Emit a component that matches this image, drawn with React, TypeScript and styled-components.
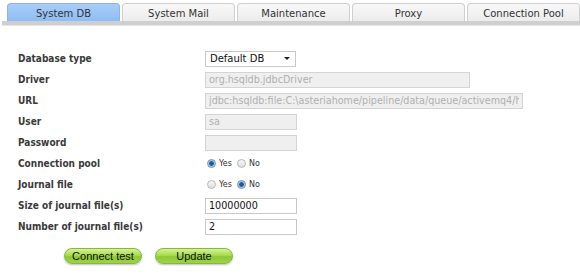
import React from "react";
import styled, { createGlobalStyle } from "styled-components";

const Global = createGlobalStyle`
  body {
    margin: 0;
    background: #fff;
    font-family: "DejaVu Sans", Verdana, sans-serif;
  }
`;

const Page = styled.div`
  width: 580px;
  height: 279px;
  overflow: hidden;
`;

const TabBar = styled.div`
  display: flex;
  gap: 2px;
  padding: 3px 0 0 5px;
  border-bottom: 4px solid #cfcfcf;
  margin-left: 2px;
  box-shadow: 0 1px 0 #e6e6e6;
`;

const Tab = styled.div<{ $active?: boolean }>`
  width: 113px;
  height: 18px;
  box-sizing: border-box;
  border: 1px solid ${(p) => (p.$active ? "#8fb3e6" : "#cfcfcf")};
  border-bottom: none;
  border-radius: 4px 4px 0 0;
  background: ${(p) =>
    p.$active
      ? "linear-gradient(#a9cdf8, #8dbdf5)"
      : "linear-gradient(#f8f8f8, #ececec)"};
  font-size: 10px;
  color: #333;
  display: flex;
  align-items: center;
  justify-content: center;
  padding-top: 1px;
`;

const Form = styled.div`
  display: grid;
  grid-template-columns: 187px auto;
  grid-auto-rows: 21px;
  align-items: center;
  padding: 23px 0 0 18px;
`;

const Label = styled.div`
  font-family: "DejaVu Sans Condensed", "DejaVu Sans", sans-serif;
  font-size: 10px;
  font-weight: bold;
  color: #3a3a3a;
`;

const Field = styled.input<{ $w: number }>`
  width: ${(p) => p.$w}px;
  height: 16px;
  box-sizing: border-box;
  border: 1px solid ${(p) => (p.disabled ? "#d4d4d4" : "#c8c8c8")};
  background: ${(p) => (p.disabled ? "#efefef" : "#fff")};
  color: ${(p) => (p.disabled ? "#b0b0b0" : "#111")};
  font-family: "DejaVu Sans", Verdana, sans-serif;
  font-size: 9.6px;
  padding: 0 3px;
  margin: 0;
  outline: none;
`;

const Select = styled.div`
  width: 91px;
  height: 16px;
  box-sizing: border-box;
  border: 1px solid #c8c8c8;
  background: #fff;
  font-size: 10px;
  color: #111;
  display: flex;
  align-items: center;
  justify-content: space-between;
  padding: 0 5px 0 4px;
`;

const Caret = styled.span`
  width: 0;
  height: 0;
  border-left: 3px solid transparent;
  border-right: 3px solid transparent;
  border-top: 3px solid #222;
`;

const RadioGroup = styled.div`
  display: flex;
  align-items: center;
  gap: 3px;
  font-size: 8px;
  color: #333;
`;

const Radio = styled.span<{ $on?: boolean }>`
  width: 9px;
  height: 9px;
  box-sizing: border-box;
  border-radius: 50%;
  border: 1px solid ${(p) => (p.$on ? "#6d8fb3" : "#b8b8b8")};
  background: ${(p) =>
    p.$on
      ? "radial-gradient(circle, #1d5f9e 0 2px, #8fb3d8 2.5px, #e4edf6 4px)"
      : "linear-gradient(#f8f8f8, #dedede)"};
  margin-left: 2px;
`;

const Buttons = styled.div`
  display: flex;
  gap: 13px;
  padding: 11px 0 0 64px;
`;

const Button = styled.div`
  width: 78px;
  height: 16px;
  border-radius: 8px;
  background: linear-gradient(#d6f29a 0%, #a8dc4c 45%, #8cc935 55%, #9fd444 100%);
  border: 1px solid #86b83a;
  box-shadow: 0 1px 2px rgba(0, 0, 0, 0.25);
  font-family: "Liberation Sans", Arial, sans-serif;
  font-size: 11px;
  color: #111;
  display: flex;
  align-items: center;
  justify-content: center;
  box-sizing: border-box;
`;

export default function App() {
  const tabs = ["System DB", "System Mail", "Maintenance", "Proxy", "Connection Pool"];
  return (
    <Page>
      <Global />
      <TabBar>
        {tabs.map((t, i) => (
          <Tab key={t} $active={i === 0}>
            {t}
          </Tab>
        ))}
      </TabBar>
      <Form>
        <Label>Database type</Label>
        <Select>
          <span>Default DB</span>
          <Caret />
        </Select>
        <Label>Driver</Label>
        <Field $w={265} disabled defaultValue="org.hsqldb.jdbcDriver" />
        <Label>URL</Label>
        <Field $w={318} disabled defaultValue="jdbc:hsqldb:file:C:\asteriahome/pipeline/data/queue/activemq4/hsqldb" />
        <Label>User</Label>
        <Field $w={92} disabled defaultValue="sa" />
        <Label>Password</Label>
        <Field $w={92} disabled defaultValue="" />
        <Label>Connection pool</Label>
        <RadioGroup>
          <Radio $on /> Yes <Radio /> No
        </RadioGroup>
        <Label>Journal file</Label>
        <RadioGroup>
          <Radio /> Yes <Radio $on /> No
        </RadioGroup>
        <Label>Size of journal file(s)</Label>
        <Field $w={92} defaultValue="10000000" />
        <Label>Number of journal file(s)</Label>
        <Field $w={92} defaultValue="2" />
      </Form>
      <Buttons>
        <Button>Connect test</Button>
        <Button>Update</Button>
      </Buttons>
    </Page>
  );
}
